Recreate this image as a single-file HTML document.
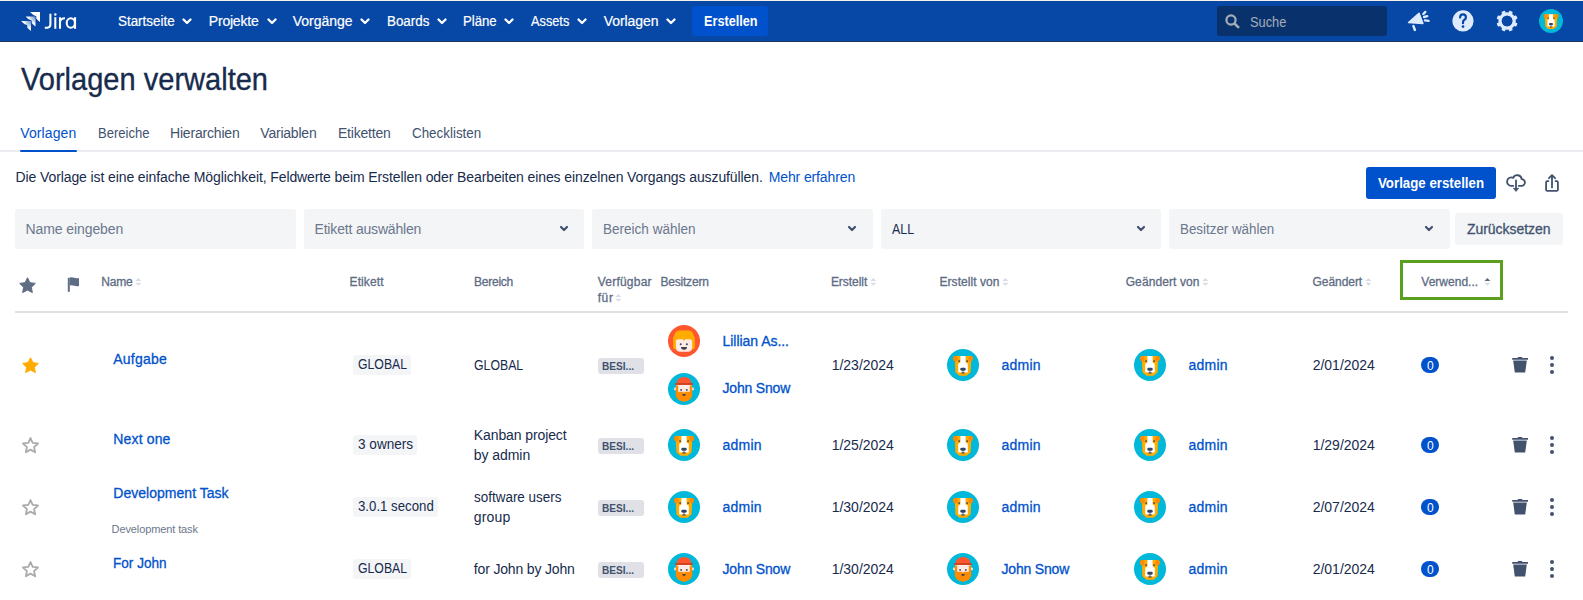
<!DOCTYPE html>
<html><head><meta charset="utf-8">
<style>
*{margin:0;padding:0;box-sizing:border-box}
html,body{width:1583px;height:600px;overflow:hidden;background:#fff;font-family:"Liberation Sans",sans-serif;color:#172B4D}
.a{position:absolute;white-space:nowrap}
</style></head><body>
<svg width="0" height="0" style="position:absolute">
<defs>
<symbol id="dog" viewBox="0 0 32 32">
<circle cx="16" cy="16" r="16" fill="#00B8D9"/>
<path d="M10 7H22Q24.2 7 24.2 9.2L23.6 23.2 19.6 26.8H12.4L8.4 23.2 7.8 9.2Q7.8 7 10 7Z" fill="#FFAB00"/>
<ellipse cx="8.3" cy="9.7" rx="2.3" ry="2.9" transform="rotate(-15 8.3 9.7)" fill="#FF8B00"/>
<ellipse cx="23.7" cy="9.7" rx="2.3" ry="2.9" transform="rotate(15 23.7 9.7)" fill="#FF8B00"/>
<path d="M13.4 7H18.6V13.6L20.8 14.8V23.4H11.2V14.8L13.4 13.6Z" fill="#fff"/>
<circle cx="12.1" cy="12.1" r="0.95" fill="#344563"/><circle cx="20.1" cy="12.1" r="0.95" fill="#344563"/>
<rect x="13.3" y="18.7" width="5.4" height="3" rx="1.4" fill="#344563"/>
<path d="M15.6 21.5h0.8v2h-0.8z M14.3 23.6h3.4v0.9h-3.4z" fill="#344563"/>
</symbol>
<symbol id="girl" viewBox="0 0 32 32">
<circle cx="16" cy="16" r="16" fill="#FF5630"/>
<path d="M10.9 5.5H21.1Q25 6.2 25.4 9.8Q27.4 12.5 26.9 16V22.6Q26.2 24.6 24 24.5H8Q5.8 24.6 5.1 22.6V16Q4.6 12.5 6.6 9.8Q7 6.2 10.9 5.5Z" fill="#FFAB00"/>
<path d="M7.9 15.2Q8.8 14.2 11 14.2H14.7L16 16 17.3 14.2H21Q23.2 14.2 24.1 15.2V22.3Q24.1 26.8 19.6 26.8H12.4Q7.9 26.8 7.9 22.3Z" fill="#FFEBE6"/>
<circle cx="12.7" cy="19.3" r="1" fill="#344563"/><circle cx="18.9" cy="19.3" r="1" fill="#344563"/>
<path d="M13 22H19Q19 24.8 16 24.8T13 22Z" fill="#344563"/>
<path d="M14.6 24.3Q16 23 17.4 24.3Q16.7 24.8 16 24.8T14.6 24.3Z" fill="#DE350B"/>
</symbol>
<symbol id="john" viewBox="0 0 32 32">
<circle cx="16" cy="16" r="16" fill="#00B8D9"/>
<circle cx="7.4" cy="16" r="1.4" fill="#FFEBE6"/><circle cx="24.6" cy="16" r="1.4" fill="#FFEBE6"/>
<path d="M8.4 11.5h15.2v8h-15.2z" fill="#FFEBE6"/>
<path d="M7.8 12.5h2.4v6.3h11.6v-6.3h2.4v9.8q0 1.6-1.2 2.4q-0.2 1.8-2 2.2q-1 1.4-3 1.1q-1.1 1-2 1q-0.9 0-2-1q-2 0.3-3-1.1q-1.8-0.4-2-2.2q-1.2-0.8-1.2-2.4z" fill="#FF8B00"/>
<path d="M15 18.8h2l-1 1.2z" fill="#FFEBE6"/>
<path d="M8.8 10.6Q8.8 4.1 16 4.1T23.2 10.6Z" fill="#FF5630"/>
<path d="M7.2 10.2H24.8V11.9H7.2Z" fill="#DE350B"/>
<circle cx="13.1" cy="16.9" r="0.95" fill="#344563"/><circle cx="18.8" cy="16.9" r="0.95" fill="#344563"/>
<path d="M14.3 21H17.7Q17.7 23.1 16 23.1T14.3 21Z" fill="#344563"/>
</symbol>
<symbol id="trash" viewBox="0 0 16 16">
<path d="M0.2 1.1h15.8v1.6h-15.8z M5.8 0h4.4v1.2h-4.4z" fill="#42526E"/>
<path d="M1.2 3.6h13.6l-1.6 12h-10.4z" fill="#42526E"/>
</symbol>
<symbol id="dots" viewBox="0 0 4 18">
<circle cx="2" cy="2" r="2" fill="#42526E"/><circle cx="2" cy="9" r="2" fill="#42526E"/><circle cx="2" cy="16" r="2" fill="#42526E"/>
</symbol>
<symbol id="starf" viewBox="0 0 17 17">
<path d="M8.50 0.75 L10.91 5.63 L16.30 6.42 L12.40 10.22 L13.32 15.58 L8.50 13.05 L3.68 15.58 L4.60 10.22 L0.70 6.42 L6.09 5.63Z" fill="#5E6C84" stroke="#5E6C84" stroke-width="1" stroke-linejoin="round"/>
</symbol>
<symbol id="stary" viewBox="0 0 17 17">
<path d="M8.50 0.75 L10.91 5.63 L16.30 6.42 L12.40 10.22 L13.32 15.58 L8.50 13.05 L3.68 15.58 L4.60 10.22 L0.70 6.42 L6.09 5.63Z" fill="#FFAB00" stroke="#FFAB00" stroke-width="1" stroke-linejoin="round"/>
</symbol>
<symbol id="staro" viewBox="0 0 17 17">
<path d="M8.50 1.00 L10.68 5.90 L16.01 6.46 L12.03 10.05 L13.14 15.29 L8.50 12.61 L3.86 15.29 L4.97 10.05 L0.99 6.46 L6.32 5.90Z" fill="none" stroke="#ABABAB" stroke-width="1.8" stroke-linejoin="round"/>
</symbol>
<symbol id="flag" viewBox="0 0 13 15">
<path d="M0.8 0.8h2v14h-2z" fill="#5E6C84"/>
<path d="M2.8 0.5q2.5 -0.4 4.5 0.3t4.7 0.2v8q-2.7 0.5-4.7-0.2t-4.5-0.3z" fill="#5E6C84"/>
</symbol>
<symbol id="chevw" viewBox="0 0 10 7">
<path d="M1.5 1.5l3.5 3.5 3.5-3.5" fill="none" stroke="#fff" stroke-width="2.3" stroke-linecap="round" stroke-linejoin="round"/>
</symbol>
<symbol id="chevd" viewBox="0 0 10 7">
<path d="M2 2l3 3 3-3" fill="none" stroke="#42526E" stroke-width="2.2" stroke-linecap="round" stroke-linejoin="round"/>
</symbol>
</defs>
</svg>

<div class="a" style="left:0;top:0;width:1583px;height:1px;background:#f4f2e8"></div>
<div class="a" style="left:0;top:1px;width:1583px;height:40px;background:#0747A6"></div>
<div class="a" style="left:0;top:41px;width:1583px;height:1px;background:#23365a"></div>
<svg class="a" style="left:0;top:0" width="90" height="42" viewBox="0 0 90 42">
<defs>
<radialGradient id="lg1" cx="1" cy="0" r="0.75"><stop offset="0" stop-color="#fff" stop-opacity="0.35"/><stop offset="1" stop-color="#fff"/></radialGradient>
</defs>
<path d="M30.1 12.1H40V21.9Q37.6 20.6 36.3 18.6V16.3Q33.2 15.8 30.1 12.1Z" fill="#fff"/>
<path d="M25.6 16.6H35.5V26.4Q33.1 25.1 31.8 23.1V20.8Q28.7 20.3 25.6 16.6Z" fill="url(#lg1)"/>
<path d="M21.1 21.1H31V30.9Q28.6 29.6 27.3 27.6V25.3Q24.2 24.8 21.1 21.1Z" fill="url(#lg1)"/>
<g fill="none" stroke="#fff" stroke-width="2.05">
<path d="M50.4 13.8V24.6Q50.4 27.7 47.4 27.7H44.8"/>
<path d="M55.3 17.2V28.8"/>
<path d="M60 17.2V28.8 M60 22.2Q60.3 18.2 65 18.2"/>
<ellipse cx="70.8" cy="22.95" rx="4.1" ry="4.75"/>
<path d="M75.05 17.2V28.8"/>
</g>
<circle cx="55.3" cy="14.5" r="1.25" fill="#fff"/>
</svg>

<div class="a" style="left:117.50px;top:14.25px;font-size:14px;line-height:14px;color:#fff;transform:scaleX(0.9571);transform-origin:0 0;-webkit-text-stroke:0.2px #fff;">Startseite</div>
<svg class="a" style="left:182.1px;top:18px" width="10" height="7"><use href="#chevw"/></svg>
<div class="a" style="left:208.80px;top:14.25px;font-size:14px;line-height:14px;color:#fff;letter-spacing:-0.207px;-webkit-text-stroke:0.2px #fff;">Projekte</div>
<svg class="a" style="left:267.0px;top:18px" width="10" height="7"><use href="#chevw"/></svg>
<div class="a" style="left:292.80px;top:14.25px;font-size:14px;line-height:14px;color:#fff;letter-spacing:-0.035px;-webkit-text-stroke:0.2px #fff;">Vorgänge</div>
<svg class="a" style="left:359.5px;top:18px" width="10" height="7"><use href="#chevw"/></svg>
<div class="a" style="left:386.60px;top:14.25px;font-size:14px;line-height:14px;color:#fff;transform:scaleX(0.9560);transform-origin:0 0;-webkit-text-stroke:0.2px #fff;">Boards</div>
<svg class="a" style="left:436.5px;top:18px" width="10" height="7"><use href="#chevw"/></svg>
<div class="a" style="left:463.00px;top:14.25px;font-size:14px;line-height:14px;color:#fff;transform:scaleX(0.9410);transform-origin:0 0;-webkit-text-stroke:0.2px #fff;">Pläne</div>
<svg class="a" style="left:504.2px;top:18px" width="10" height="7"><use href="#chevw"/></svg>
<div class="a" style="left:530.70px;top:14.25px;font-size:14px;line-height:14px;color:#fff;transform:scaleX(0.9116);transform-origin:0 0;-webkit-text-stroke:0.2px #fff;">Assets</div>
<svg class="a" style="left:577.2px;top:18px" width="10" height="7"><use href="#chevw"/></svg>
<div class="a" style="left:603.70px;top:14.25px;font-size:14px;line-height:14px;color:#fff;letter-spacing:-0.053px;-webkit-text-stroke:0.2px #fff;">Vorlagen</div>
<svg class="a" style="left:666.0px;top:18px" width="10" height="7"><use href="#chevw"/></svg>
<div class="a" style="left:692px;top:6px;width:76px;height:30px;background:#0052CC;border-radius:3px"></div>
<div class="a" style="left:703.70px;top:14.25px;font-size:14px;line-height:14px;color:#fff;transform:scaleX(0.9064);transform-origin:0 0;font-weight:bold;">Erstellen</div>
<div class="a" style="left:1217px;top:6px;width:170px;height:30px;background:#09326C;border-radius:3px"></div>
<svg class="a" style="left:1225px;top:14px" width="15" height="15" viewBox="0 0 15 15"><circle cx="6" cy="6" r="4.6" fill="none" stroke="#A5ADBA" stroke-width="2.2"/><path d="M9.6 9.6l3.6 3.6" stroke="#A5ADBA" stroke-width="2.6" stroke-linecap="round"/></svg>
<div class="a" style="left:1249.60px;top:15.15px;font-size:14px;line-height:14px;color:#A5ADBA;transform:scaleX(0.9171);transform-origin:0 0;">Suche</div>
<svg class="a" style="left:1400px;top:0" width="183" height="42" viewBox="0 0 183 42">
<g fill="#DEEBFF" stroke="#DEEBFF" stroke-linejoin="round">
<path d="M8.6 22.5L19 13.3 22.8 23.4Z" stroke-width="1.6"/>
</g>
<g stroke="#DEEBFF" stroke-width="2.4" stroke-linecap="round" fill="none">
<path d="M13.4 26L14.9 30"/>
<path d="M23.4 14L25.3 11.9"/>
<path d="M24.1 17L27.2 16.2"/>
<path d="M25 20.4L28.6 20.9"/>
</g>
<circle cx="63" cy="20.9" r="10.6" fill="#DEEBFF"/>
<path d="M60.1 17.6Q60.1 14.4 63 14.4T65.9 17.4Q65.9 18.9 64.4 19.8T63 22.4V23.2" fill="none" stroke="#0747A6" stroke-width="2.2" stroke-linecap="round"/>
<circle cx="63" cy="26.6" r="1.35" fill="#0747A6"/>
<g fill="#DEEBFF"><rect x="105.20" y="10.40" width="3.8" height="5" rx="0.8" transform="rotate(22.5 107.10 21)"/><rect x="105.20" y="10.40" width="3.8" height="5" rx="0.8" transform="rotate(67.5 107.10 21)"/><rect x="105.20" y="10.40" width="3.8" height="5" rx="0.8" transform="rotate(112.5 107.10 21)"/><rect x="105.20" y="10.40" width="3.8" height="5" rx="0.8" transform="rotate(157.5 107.10 21)"/><rect x="105.20" y="10.40" width="3.8" height="5" rx="0.8" transform="rotate(202.5 107.10 21)"/><rect x="105.20" y="10.40" width="3.8" height="5" rx="0.8" transform="rotate(247.5 107.10 21)"/><rect x="105.20" y="10.40" width="3.8" height="5" rx="0.8" transform="rotate(292.5 107.10 21)"/><rect x="105.20" y="10.40" width="3.8" height="5" rx="0.8" transform="rotate(337.5 107.10 21)"/></g>
<circle cx="107.10" cy="21" r="7.1" fill="none" stroke="#DEEBFF" stroke-width="3.2"/>
</svg>
<svg class="a" style="left:1539px;top:9px" width="24" height="24"><use href="#dog"/></svg>

<div class="a" style="left:21.00px;top:64.08px;font-size:30.5px;line-height:30.5px;color:#172B4D;transform:scaleX(0.9522);transform-origin:0 0;-webkit-text-stroke:0.35px #172B4D;">Vorlagen verwalten</div>
<div class="a" style="left:20.30px;top:126.15px;font-size:14px;line-height:14px;color:#0052CC;letter-spacing:0.104px;">Vorlagen</div>
<div class="a" style="left:97.60px;top:126.15px;font-size:14px;line-height:14px;color:#42526E;transform:scaleX(0.9302);transform-origin:0 0;">Bereiche</div>
<div class="a" style="left:170.00px;top:126.15px;font-size:14px;line-height:14px;color:#42526E;letter-spacing:-0.188px;">Hierarchien</div>
<div class="a" style="left:260.30px;top:126.15px;font-size:14px;line-height:14px;color:#42526E;letter-spacing:-0.214px;">Variablen</div>
<div class="a" style="left:337.90px;top:126.15px;font-size:14px;line-height:14px;color:#42526E;letter-spacing:-0.184px;">Etiketten</div>
<div class="a" style="left:411.50px;top:126.15px;font-size:14px;line-height:14px;color:#42526E;transform:scaleX(0.9563);transform-origin:0 0;">Checklisten</div>
<div class="a" style="left:0;top:150px;width:1583px;height:2px;background:#EBECF0"></div>
<div class="a" style="left:20px;top:150px;width:57px;height:2px;background:#0052CC;border-radius:1px"></div>
<div class="a" style="left:15.50px;top:170.15px;font-size:14px;line-height:14px;color:#172B4D;letter-spacing:-0.102px;">Die Vorlage ist eine einfache Möglichkeit, Feldwerte beim Erstellen oder Bearbeiten eines einzelnen Vorgangs auszufüllen.</div>
<div class="a" style="left:768.70px;top:170.15px;font-size:14px;line-height:14px;color:#0052CC;letter-spacing:-0.119px;">Mehr erfahren</div>
<div class="a" style="left:1366px;top:167px;width:130px;height:32px;background:#0052CC;border-radius:3px"></div>
<div class="a" style="left:1378.00px;top:176.15px;font-size:14px;line-height:14px;color:#fff;transform:scaleX(0.9482);transform-origin:0 0;font-weight:bold;">Vorlage erstellen</div>
<svg class="a" style="left:1500px;top:168px" width="66" height="30" viewBox="1500 168 66 30">
<g fill="none" stroke="#42526E" stroke-width="1.8" stroke-linecap="round" stroke-linejoin="round">
<path d="M1513.3 185.8H1511.3A4.2 4.2 0 1 1 1513.25 177.9A4.4 4.4 0 0 1 1521.68 179.15A3.35 3.35 0 0 1 1521.5 185.85H1518.7"/>
<path d="M1516 180.4V188"/>
<path d="M1548.4 181.1H1547.3Q1546.1 181.1 1546.1 182.3V189.7Q1546.1 190.9 1547.3 190.9H1556.7Q1557.9 190.9 1557.9 189.7V182.3Q1557.9 181.1 1556.7 181.1H1555.6"/>
<path d="M1552 187.4V175.2 M1548.9 178.2L1552 175.1 1555.1 178.2"/>
</g>
<path d="M1513.4 188.3H1518.6L1516 191.4Z" fill="#42526E" stroke="#42526E" stroke-width="0.8" stroke-linejoin="round"/>
</svg>

<div class="a" style="left:15px;top:209px;width:281px;height:40px;background:#F4F5F7;border-radius:3px"></div>
<div class="a" style="left:25.50px;top:222.15px;font-size:14px;line-height:14px;color:#6B778C;letter-spacing:-0.088px;">Name eingeben</div>
<div class="a" style="left:304px;top:209px;width:280px;height:40px;background:#F4F5F7;border-radius:3px"></div>
<div class="a" style="left:314.50px;top:222.15px;font-size:14px;line-height:14px;color:#6B778C;letter-spacing:-0.177px;">Etikett auswählen</div>
<svg class="a" style="left:558.5px;top:225.3px" width="10" height="7"><use href="#chevd"/></svg>
<div class="a" style="left:592px;top:209px;width:281px;height:40px;background:#F4F5F7;border-radius:3px"></div>
<div class="a" style="left:602.50px;top:222.15px;font-size:14px;line-height:14px;color:#6B778C;transform:scaleX(0.9664);transform-origin:0 0;">Bereich wählen</div>
<svg class="a" style="left:846.9px;top:225.3px" width="10" height="7"><use href="#chevd"/></svg>
<div class="a" style="left:881px;top:209px;width:280px;height:40px;background:#F4F5F7;border-radius:3px"></div>
<div class="a" style="left:891.50px;top:222.15px;font-size:14px;line-height:14px;color:#172B4D;transform:scaleX(0.8833);transform-origin:0 0;">ALL</div>
<svg class="a" style="left:1135.5px;top:225.3px" width="10" height="7"><use href="#chevd"/></svg>
<div class="a" style="left:1169px;top:209px;width:281px;height:40px;background:#F4F5F7;border-radius:3px"></div>
<div class="a" style="left:1179.50px;top:222.15px;font-size:14px;line-height:14px;color:#6B778C;transform:scaleX(0.9542);transform-origin:0 0;">Besitzer wählen</div>
<svg class="a" style="left:1423.9px;top:225.3px" width="10" height="7"><use href="#chevd"/></svg>
<div class="a" style="left:1455px;top:213px;width:108px;height:32px;background:#F4F5F7;border-radius:3px"></div>
<div class="a" style="left:1467.00px;top:222.15px;font-size:14px;line-height:14px;color:#42526E;-webkit-text-stroke:0.3px #42526E;letter-spacing:-0.048px;">Zurücksetzen</div>
<svg class="a" style="left:18.5px;top:276.5px" width="17" height="17"><use href="#starf"/></svg>
<svg class="a" style="left:67px;top:277px" width="13" height="15"><use href="#flag"/></svg>
<div class="a" style="left:101.30px;top:275.84px;font-size:12px;line-height:12px;color:#5E6C84;-webkit-text-stroke:0.3px #5E6C84;letter-spacing:-0.205px;">Name</div>
<svg class="a" style="left:135.1px;top:278px" width="7" height="9" viewBox="0 0 7 9"><path d="M0.4 3L3.4 0 6.4 3z" fill="#D9DCE2"/><path d="M0.4 4.8L3.4 7.8 6.4 4.8z" fill="#D9DCE2"/></svg>
<div class="a" style="left:349.60px;top:275.84px;font-size:12px;line-height:12px;color:#5E6C84;-webkit-text-stroke:0.3px #5E6C84;letter-spacing:0.092px;">Etikett</div>
<div class="a" style="left:473.90px;top:275.84px;font-size:12px;line-height:12px;color:#5E6C84;-webkit-text-stroke:0.3px #5E6C84;letter-spacing:-0.215px;">Bereich</div>
<div class="a" style="left:597.70px;top:275.84px;font-size:12px;line-height:12px;color:#5E6C84;-webkit-text-stroke:0.3px #5E6C84;letter-spacing:0.233px;">Verfügbar</div>
<div class="a" style="left:660.40px;top:275.84px;font-size:12px;line-height:12px;color:#5E6C84;-webkit-text-stroke:0.3px #5E6C84;letter-spacing:-0.190px;">Besitzern</div>
<div class="a" style="left:830.90px;top:275.84px;font-size:12px;line-height:12px;color:#5E6C84;-webkit-text-stroke:0.3px #5E6C84;letter-spacing:-0.039px;">Erstellt</div>
<svg class="a" style="left:870.1px;top:278px" width="7" height="9" viewBox="0 0 7 9"><path d="M0.4 3L3.4 0 6.4 3z" fill="#D9DCE2"/><path d="M0.4 4.8L3.4 7.8 6.4 4.8z" fill="#D9DCE2"/></svg>
<div class="a" style="left:939.50px;top:275.84px;font-size:12px;line-height:12px;color:#5E6C84;-webkit-text-stroke:0.3px #5E6C84;letter-spacing:0.050px;">Erstellt von</div>
<svg class="a" style="left:1002.0px;top:278px" width="7" height="9" viewBox="0 0 7 9"><path d="M0.4 3L3.4 0 6.4 3z" fill="#D9DCE2"/><path d="M0.4 4.8L3.4 7.8 6.4 4.8z" fill="#D9DCE2"/></svg>
<div class="a" style="left:1125.70px;top:275.84px;font-size:12px;line-height:12px;color:#5E6C84;-webkit-text-stroke:0.3px #5E6C84;letter-spacing:0.098px;">Geändert von</div>
<svg class="a" style="left:1201.6px;top:278px" width="7" height="9" viewBox="0 0 7 9"><path d="M0.4 3L3.4 0 6.4 3z" fill="#D9DCE2"/><path d="M0.4 4.8L3.4 7.8 6.4 4.8z" fill="#D9DCE2"/></svg>
<div class="a" style="left:1312.60px;top:275.84px;font-size:12px;line-height:12px;color:#5E6C84;-webkit-text-stroke:0.3px #5E6C84;letter-spacing:-0.061px;">Geändert</div>
<svg class="a" style="left:1365.0px;top:278px" width="7" height="9" viewBox="0 0 7 9"><path d="M0.4 3L3.4 0 6.4 3z" fill="#D9DCE2"/><path d="M0.4 4.8L3.4 7.8 6.4 4.8z" fill="#D9DCE2"/></svg>
<div class="a" style="left:597.70px;top:291.94px;font-size:12px;line-height:12px;color:#5E6C84;-webkit-text-stroke:0.3px #5E6C84;letter-spacing:0.598px;">für</div>
<svg class="a" style="left:615.0px;top:294px" width="7" height="9" viewBox="0 0 7 9"><path d="M0.4 3L3.4 0 6.4 3z" fill="#D9DCE2"/><path d="M0.4 4.8L3.4 7.8 6.4 4.8z" fill="#D9DCE2"/></svg>
<div class="a" style="left:1400px;top:260px;width:103px;height:40px;border:3px solid #5AA01E"></div>
<div class="a" style="left:1421.30px;top:275.84px;font-size:12px;line-height:12px;color:#5E6C84;-webkit-text-stroke:0.3px #5E6C84;letter-spacing:0.011px;">Verwend...</div>
<svg class="a" style="left:1483.6px;top:278px" width="7" height="9" viewBox="0 0 7 9"><path d="M0.4 3L3.4 0 6.4 3z" fill="#5E6C84"/><path d="M0.4 4.8L3.4 7.8 6.4 4.8z" fill="#D9DCE2"/></svg>
<div class="a" style="left:15px;top:311px;width:1553px;height:2px;background:#DFE1E6"></div>
<svg class="a" style="left:21.5px;top:356.5px" width="17" height="17"><use href="#stary"/></svg>
<div class="a" style="left:113.30px;top:352.15px;font-size:14px;line-height:14px;color:#0052CC;-webkit-text-stroke:0.3px #0052CC;letter-spacing:0.206px;">Aufgabe</div>
<div class="a" style="left:353px;top:355px;width:58px;height:20px;background:#F4F5F7;border-radius:3px"></div><div class="a" style="left:357.60px;top:357.45px;font-size:14px;line-height:14px;color:#172B4D;transform:scaleX(0.8763);transform-origin:0 0;">GLOBAL</div>
<div class="a" style="left:473.80px;top:358.15px;font-size:14px;line-height:14px;color:#172B4D;transform:scaleX(0.8781);transform-origin:0 0;">GLOBAL</div>
<div class="a" style="left:598px;top:358px;width:46px;height:16px;background:#DFE1E6;border-radius:3px"></div><div class="a" style="left:602.00px;top:360.18px;font-size:11.6px;line-height:11.6px;color:#42526E;transform:scaleX(0.8711);transform-origin:0 0;font-weight:bold;">BESI...</div>
<svg class="a" style="left:668px;top:325px" width="32" height="32"><use href="#girl"/></svg><div class="a" style="left:722.50px;top:333.95px;font-size:14px;line-height:14px;color:#0052CC;-webkit-text-stroke:0.3px #0052CC;letter-spacing:-0.035px;">Lillian As...</div>
<svg class="a" style="left:668px;top:373px" width="32" height="32"><use href="#john"/></svg><div class="a" style="left:722.50px;top:381.45px;font-size:14px;line-height:14px;color:#0052CC;-webkit-text-stroke:0.3px #0052CC;letter-spacing:-0.189px;">John Snow</div>
<div class="a" style="left:831.70px;top:358.15px;font-size:14px;line-height:14px;color:#172B4D;letter-spacing:-0.011px;">1/23/2024</div>
<svg class="a" style="left:947px;top:349px" width="32" height="32"><use href="#dog"/></svg><div class="a" style="left:1001.50px;top:357.75px;font-size:14px;line-height:14px;color:#0052CC;-webkit-text-stroke:0.3px #0052CC;letter-spacing:0.216px;">admin</div>
<svg class="a" style="left:1134px;top:349px" width="32" height="32"><use href="#dog"/></svg><div class="a" style="left:1188.50px;top:357.75px;font-size:14px;line-height:14px;color:#0052CC;-webkit-text-stroke:0.3px #0052CC;letter-spacing:0.216px;">admin</div>
<div class="a" style="left:1312.70px;top:358.15px;font-size:14px;line-height:14px;color:#172B4D;letter-spacing:-0.011px;">2/01/2024</div>
<div class="a" style="left:1421px;top:357px;width:18px;height:16px;border-radius:8px;background:#0052CC"></div><div class="a" style="left:1427.00px;top:359.84px;font-size:12px;line-height:12px;color:#fff;">0</div>
<svg class="a" style="left:1512px;top:357px" width="16" height="16"><use href="#trash"/></svg><svg class="a" style="left:1550px;top:356px" width="4" height="18"><use href="#dots"/></svg>
<svg class="a" style="left:21.5px;top:436.9px" width="17" height="17"><use href="#staro"/></svg>
<div class="a" style="left:113.30px;top:432.45px;font-size:14px;line-height:14px;color:#0052CC;-webkit-text-stroke:0.3px #0052CC;letter-spacing:0.153px;">Next one</div>
<div class="a" style="left:353px;top:435px;width:64px;height:20px;background:#F4F5F7;border-radius:3px"></div><div class="a" style="left:357.60px;top:437.45px;font-size:14px;line-height:14px;color:#172B4D;transform:scaleX(0.9699);transform-origin:0 0;">3 owners</div>
<div class="a" style="left:473.80px;top:427.85px;font-size:14px;line-height:14px;color:#172B4D;letter-spacing:-0.106px;">Kanban project</div>
<div class="a" style="left:473.80px;top:447.85px;font-size:14px;line-height:14px;color:#172B4D;letter-spacing:-0.059px;">by admin</div>
<div class="a" style="left:598px;top:438px;width:46px;height:16px;background:#DFE1E6;border-radius:3px"></div><div class="a" style="left:602.00px;top:440.18px;font-size:11.6px;line-height:11.6px;color:#42526E;transform:scaleX(0.8711);transform-origin:0 0;font-weight:bold;">BESI...</div>
<svg class="a" style="left:668px;top:429px" width="32" height="32"><use href="#dog"/></svg><div class="a" style="left:722.50px;top:437.75px;font-size:14px;line-height:14px;color:#0052CC;-webkit-text-stroke:0.3px #0052CC;letter-spacing:0.216px;">admin</div>
<div class="a" style="left:831.70px;top:438.15px;font-size:14px;line-height:14px;color:#172B4D;letter-spacing:-0.011px;">1/25/2024</div>
<svg class="a" style="left:947px;top:429px" width="32" height="32"><use href="#dog"/></svg><div class="a" style="left:1001.50px;top:437.75px;font-size:14px;line-height:14px;color:#0052CC;-webkit-text-stroke:0.3px #0052CC;letter-spacing:0.216px;">admin</div>
<svg class="a" style="left:1134px;top:429px" width="32" height="32"><use href="#dog"/></svg><div class="a" style="left:1188.50px;top:437.75px;font-size:14px;line-height:14px;color:#0052CC;-webkit-text-stroke:0.3px #0052CC;letter-spacing:0.216px;">admin</div>
<div class="a" style="left:1312.70px;top:438.15px;font-size:14px;line-height:14px;color:#172B4D;letter-spacing:-0.011px;">1/29/2024</div>
<div class="a" style="left:1421px;top:437px;width:18px;height:16px;border-radius:8px;background:#0052CC"></div><div class="a" style="left:1427.00px;top:439.84px;font-size:12px;line-height:12px;color:#fff;">0</div>
<svg class="a" style="left:1512px;top:437px" width="16" height="16"><use href="#trash"/></svg><svg class="a" style="left:1550px;top:436px" width="4" height="18"><use href="#dots"/></svg>
<svg class="a" style="left:21.5px;top:498.9px" width="17" height="17"><use href="#staro"/></svg>
<div class="a" style="left:113.30px;top:486.35px;font-size:14px;line-height:14px;color:#0052CC;-webkit-text-stroke:0.3px #0052CC;letter-spacing:0.024px;">Development Task</div>
<div class="a" style="left:111.60px;top:523.69px;font-size:11px;line-height:11px;color:#6B778C;letter-spacing:-0.111px;">Development task</div>
<div class="a" style="left:353px;top:497px;width:85px;height:20px;background:#F4F5F7;border-radius:3px"></div><div class="a" style="left:357.60px;top:499.45px;font-size:14px;line-height:14px;color:#172B4D;transform:scaleX(0.9454);transform-origin:0 0;">3.0.1 second</div>
<div class="a" style="left:473.80px;top:490.15px;font-size:14px;line-height:14px;color:#172B4D;transform:scaleX(0.9612);transform-origin:0 0;">software users</div>
<div class="a" style="left:473.80px;top:510.15px;font-size:14px;line-height:14px;color:#172B4D;letter-spacing:0.147px;">group</div>
<div class="a" style="left:598px;top:500px;width:46px;height:16px;background:#DFE1E6;border-radius:3px"></div><div class="a" style="left:602.00px;top:502.18px;font-size:11.6px;line-height:11.6px;color:#42526E;transform:scaleX(0.8711);transform-origin:0 0;font-weight:bold;">BESI...</div>
<svg class="a" style="left:668px;top:491px" width="32" height="32"><use href="#dog"/></svg><div class="a" style="left:722.50px;top:499.75px;font-size:14px;line-height:14px;color:#0052CC;-webkit-text-stroke:0.3px #0052CC;letter-spacing:0.216px;">admin</div>
<div class="a" style="left:831.70px;top:500.15px;font-size:14px;line-height:14px;color:#172B4D;letter-spacing:-0.011px;">1/30/2024</div>
<svg class="a" style="left:947px;top:491px" width="32" height="32"><use href="#dog"/></svg><div class="a" style="left:1001.50px;top:499.75px;font-size:14px;line-height:14px;color:#0052CC;-webkit-text-stroke:0.3px #0052CC;letter-spacing:0.216px;">admin</div>
<svg class="a" style="left:1134px;top:491px" width="32" height="32"><use href="#dog"/></svg><div class="a" style="left:1188.50px;top:499.75px;font-size:14px;line-height:14px;color:#0052CC;-webkit-text-stroke:0.3px #0052CC;letter-spacing:0.216px;">admin</div>
<div class="a" style="left:1312.70px;top:500.15px;font-size:14px;line-height:14px;color:#172B4D;letter-spacing:-0.011px;">2/07/2024</div>
<div class="a" style="left:1421px;top:499px;width:18px;height:16px;border-radius:8px;background:#0052CC"></div><div class="a" style="left:1427.00px;top:501.84px;font-size:12px;line-height:12px;color:#fff;">0</div>
<svg class="a" style="left:1512px;top:499px" width="16" height="16"><use href="#trash"/></svg><svg class="a" style="left:1550px;top:498px" width="4" height="18"><use href="#dots"/></svg>
<svg class="a" style="left:21.5px;top:560.9px" width="17" height="17"><use href="#staro"/></svg>
<div class="a" style="left:113.30px;top:556.35px;font-size:14px;line-height:14px;color:#0052CC;transform:scaleX(0.9702);transform-origin:0 0;-webkit-text-stroke:0.3px #0052CC;">For John</div>
<div class="a" style="left:353px;top:559px;width:58px;height:20px;background:#F4F5F7;border-radius:3px"></div><div class="a" style="left:357.60px;top:561.45px;font-size:14px;line-height:14px;color:#172B4D;transform:scaleX(0.8763);transform-origin:0 0;">GLOBAL</div>
<div class="a" style="left:473.80px;top:561.95px;font-size:14px;line-height:14px;color:#172B4D;letter-spacing:-0.161px;">for John by John</div>
<div class="a" style="left:598px;top:562px;width:46px;height:16px;background:#DFE1E6;border-radius:3px"></div><div class="a" style="left:602.00px;top:564.18px;font-size:11.6px;line-height:11.6px;color:#42526E;transform:scaleX(0.8711);transform-origin:0 0;font-weight:bold;">BESI...</div>
<svg class="a" style="left:668px;top:553px" width="32" height="32"><use href="#john"/></svg><div class="a" style="left:722.50px;top:561.75px;font-size:14px;line-height:14px;color:#0052CC;-webkit-text-stroke:0.3px #0052CC;letter-spacing:-0.189px;">John Snow</div>
<div class="a" style="left:831.70px;top:562.15px;font-size:14px;line-height:14px;color:#172B4D;letter-spacing:-0.011px;">1/30/2024</div>
<svg class="a" style="left:947px;top:553px" width="32" height="32"><use href="#john"/></svg><div class="a" style="left:1001.50px;top:561.75px;font-size:14px;line-height:14px;color:#0052CC;-webkit-text-stroke:0.3px #0052CC;letter-spacing:-0.189px;">John Snow</div>
<svg class="a" style="left:1134px;top:553px" width="32" height="32"><use href="#dog"/></svg><div class="a" style="left:1188.50px;top:561.75px;font-size:14px;line-height:14px;color:#0052CC;-webkit-text-stroke:0.3px #0052CC;letter-spacing:0.216px;">admin</div>
<div class="a" style="left:1312.70px;top:562.15px;font-size:14px;line-height:14px;color:#172B4D;letter-spacing:-0.011px;">2/01/2024</div>
<div class="a" style="left:1421px;top:561px;width:18px;height:16px;border-radius:8px;background:#0052CC"></div><div class="a" style="left:1427.00px;top:563.84px;font-size:12px;line-height:12px;color:#fff;">0</div>
<svg class="a" style="left:1512px;top:561px" width="16" height="16"><use href="#trash"/></svg><svg class="a" style="left:1550px;top:560px" width="4" height="18"><use href="#dots"/></svg>
</body></html>
